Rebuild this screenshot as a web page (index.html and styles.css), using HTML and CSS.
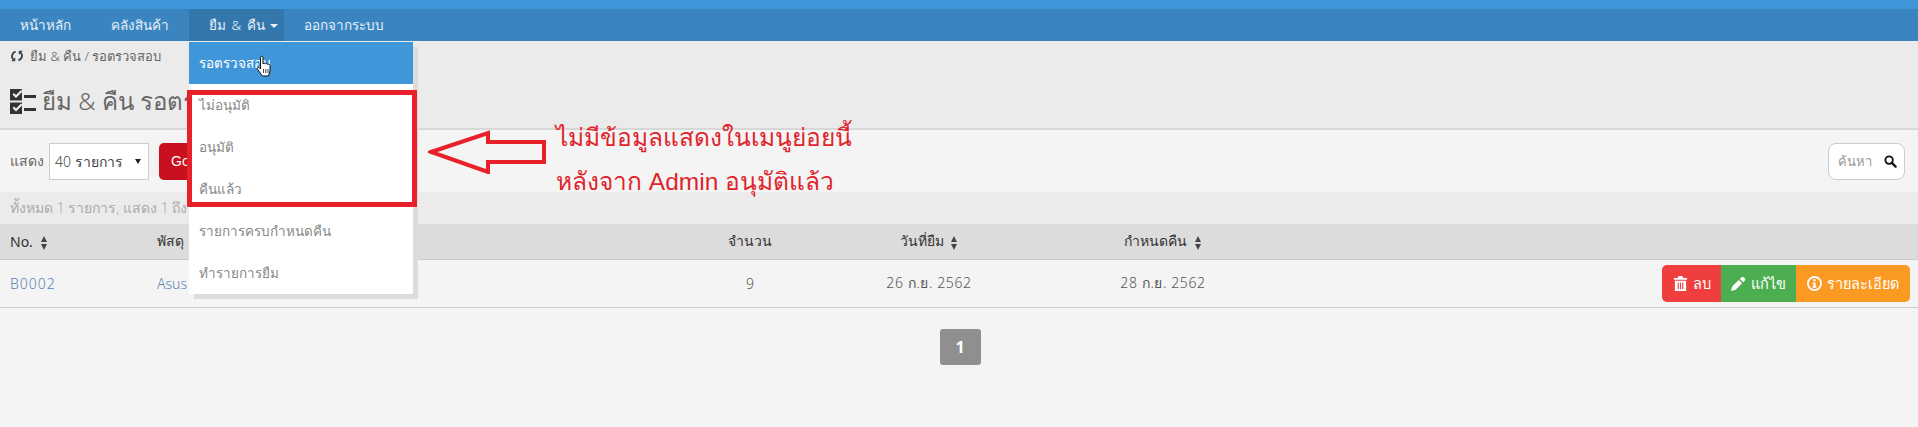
FILE: index.html
```html
<!DOCTYPE html>
<html lang="th">
<head>
  <meta charset="UTF-8">
  <title>ยืม &amp; คืน รอตรวจสอบ</title>
  <link rel="stylesheet" href="styles.css">
</head>
<body>
  <div class="top-strip"></div>
  <nav class="navbar">
    <a href="#">หน้าหลัก</a>
    <a href="#">คลังสินค้า</a>
    <a href="#" class="active">ยืม &amp; คืน <span class="caret"></span></a>
    <a href="#">ออกจากระบบ</a>
  </nav>

  <div class="page-head">
    <div class="breadcrumb">
      <svg class="crumb-icon" viewBox="0 0 16 16"><path d="M6.500 2.200A6 6 0 0 0 3 12.400L1.400 14H6V9.400l-1.600 1.600a4 4 0 0 1 2.100-6.700zM9.500 13.800A6 6 0 0 0 13 3.600L14.600 2H10v4.600l1.600-1.600a4 4 0 0 1-2.100 6.700z"/></svg>
      ยืม &amp; คืน / รอตรวจสอบ
    </div>
    <h1>
      <svg class="title-icon" viewBox="0 0 26 26">
        <path d="M0 0h12v11.500H0zM0 13.500h12V25H0z"/>
        <path d="M2.500 5.500l1.500-1.500 2 2 5-5 1.500 1.500-6.500 6.500zM2.500 19l1.500-1.500 2 2 5-5 1.500 1.500-6.500 6.500z" fill="#ebebeb"/>
        <path d="M14 6h12v3H14zM14 19h12v3H14z"/>
      </svg>
      ยืม &amp; คืน รอตรวจสอบ
    </h1>
  </div>

  <div class="toolbar">
    <div class="page-size">
      <label for="limit">แสดง</label>
      <span class="select-wrap"><select id="limit"><option>40 รายการ</option></select></span>
      <button class="btn-go">Go</button>
    </div>
    <div class="search-box">
      <span>ค้นหา</span>
      <svg viewBox="0 0 14 14"><circle cx="5.500" cy="5.500" r="4" fill="none" stroke="#111" stroke-width="2"/><path d="M8.500 8.500l4 4" stroke="#111" stroke-width="2.500" stroke-linecap="round"/></svg>
    </div>
  </div>

  <div class="summary">ทั้งหมด 1 รายการ, แสดง 1 ถึง 1 จาก 1 รายการ</div>

  <table class="data-table">
    <colgroup>
      <col class="col-no"><col class="col-item"><col class="col-qty"><col class="col-date"><col class="col-due"><col>
    </colgroup>
    <thead>
      <tr>
        <th class="left">No. <span class="sort"></span></th>
        <th class="left">พัสดุ</th>
        <th>จำนวน</th>
        <th>วันที่ยืม <span class="sort"></span></th>
        <th>กำหนดคืน <span class="sort"></span></th>
        <th></th>
      </tr>
    </thead>
    <tbody>
      <tr>
        <td class="left"><a href="#" class="code">B0002</a></td>
        <td class="left"><a href="#">Asus</a></td>
        <td>9</td>
        <td class="date">26 ก.ย. 2562</td>
        <td class="date">28 ก.ย. 2562</td>
        <td class="actions">
          <div class="btn-group">
            <a href="#" class="btn btn-del">
              <svg viewBox="0 0 14 16"><path d="M5 0h4l1 2h4v2H0V2h4zM1 5h12v11H1zM4 7v7h1.200V7zM6.400 7v7h1.200V7zM8.800 7v7H10V7z" fill-rule="evenodd"/></svg>
              ลบ
            </a>
            <a href="#" class="btn btn-edit">
              <svg viewBox="0 0 16 16"><path d="M11 1.500a2 2 0 0 1 2.800 0l.8.800a2 2 0 0 1 0 2.800L13 6.700 9.400 3.100zM8.300 4.200l3.600 3.600L5 14.600 0 16l1.400-5z"/></svg>
              แก้ไข
            </a>
            <a href="#" class="btn btn-info">
              <svg viewBox="0 0 16 16"><path fill-rule="evenodd" d="M8 0a8 8 0 1 1 0 16A8 8 0 0 1 8 0zm0 2a6 6 0 1 0 0 12A6 6 0 0 0 8 2zM6.800 3.500h2.400v2H6.800zM6 7h3.200v4H10v1.500H6V11h.8V8.500H6z"/></svg>
              รายละเอียด
            </a>
          </div>
        </td>
      </tr>
    </tbody>
  </table>

  <div class="pagination"><a href="#">1</a></div>

  <!-- เมนูย่อยที่เปิดอยู่ -->
  <ul class="dropdown">
    <li class="hover">รอตรวจสอบ</li>
    <li>ไม่อนุมัติ</li>
    <li>อนุมัติ</li>
    <li>คืนแล้ว</li>
    <li>รายการครบกำหนดคืน</li>
    <li>ทำรายการยืม</li>
  </ul>

  <svg class="hand" viewBox="0 0 17 22">
    <path d="M5 1.500c1-.8 2 0 2 1V9c.5-1 2.200-1 2.500 0 .6-.8 2.100-.6 2.400.5.700-.5 2.100-.2 2.100 1V16l-1.500 5H6.500L2 15c-1.500-2-.3-3.400 1.300-2.300L4.500 14V3c0-.5 0-1 .5-1.500z" fill="#fff" stroke="#111" stroke-width="1"/>
    <path d="M7.500 14v4M9.800 14v4M12 14v4" stroke="#111" stroke-width=".8"/>
  </svg>

  <!-- คำอธิบายบนภาพ -->
  <div class="mark-box"></div>
  <svg class="mark-arrow" viewBox="0 0 120 44">
    <path d="M3 22 60 3v9h56v20H60v10z" fill="none" stroke="#e8202a" stroke-width="4"/>
  </svg>
  <div class="mark-text">
    <p>ไม่มีข้อมูลแสดงในเมนูย่อยนี้</p>
    <p>หลังจาก Admin อนุมัติแล้ว</p>
  </div>
</body>
</html>
```

FILE: styles.css
```css
* {
  box-sizing: border-box;
}
html, body {
  height: 100%;
}
body {
  margin: 0;
  background-color: #f4f4f4;
  color: #555;
  font-family: "Noto Sans", "DejaVu Sans", sans-serif;
  font-size: 14px;
  font-weight: 300;
  overflow: hidden;
}
a {
  text-decoration: none;
}
.top-strip {
  height: 9px;
  background-color: #3f97d9;
}
.navbar {
  display: flex;
  height: 32px;
  background-color: #3a85c0;
}
.navbar a {
  padding: 0 20px;
  line-height: 32px;
  color: #e6f0f8;
  font-size: 13.5px;
}
.navbar a.active {
  width: 95px;
  padding: 0 0 0 20px;
  word-spacing: 2px;
  background-color: #3477ac;
  white-space: nowrap;
}
.caret {
  display: inline-block;
  vertical-align: middle;
  border-top: 4px solid #e6f0f8;
  border-left: 4px solid transparent;
  border-right: 4px solid transparent;
}
.page-head {
  height: 89px;
  padding: 4px 10px 0;
  background-color: #ebebeb;
  border-bottom: 2px solid #d8d8d8;
}
.breadcrumb {
  display: flex;
  align-items: center;
  gap: 6px;
  height: 22px;
  color: #666;
  font-size: 13px;
}
.crumb-icon {
  width: 14px;
  height: 14px;
  fill: #444;
}
h1 {
  display: flex;
  align-items: center;
  gap: 6px;
  margin: 15px 0 0;
  font-size: 24px;
  font-weight: 300;
  color: #666;
}
.title-icon {
  width: 26px;
  height: 26px;
  fill: #333;
}
.toolbar {
  display: flex;
  justify-content: space-between;
  align-items: center;
  height: 62px;
  padding: 0 13px 0 10px;
}
.page-size {
  display: flex;
  align-items: center;
  gap: 5px;
  color: #666;
}
.select-wrap {
  position: relative;
  display: block;
}
.select-wrap::after {
  content: "";
  position: absolute;
  right: 8px;
  top: 16px;
  border-top: 5px solid #222;
  border-left: 3px solid transparent;
  border-right: 3px solid transparent;
}
.select-wrap select {
  display: block;
  width: 100px;
  height: 37px;
  padding-left: 5px;
  appearance: none;
  background-color: #fff;
  border: 1px solid #ccc;
  border-radius: 0;
  color: #444;
  font-family: inherit;
  font-size: 14px;
  font-weight: 300;
}
.btn-go {
  width: 60px;
  height: 37px;
  margin-left: 5px;
  padding: 0 0 0 12px;
  background-color: #c8101f;
  border: none;
  border-radius: 5px;
  color: #fff;
  font-size: 14px;
  text-align: left;
}
.search-box {
  display: flex;
  justify-content: space-between;
  align-items: center;
  width: 77px;
  height: 37px;
  padding: 0 7px 0 9px;
  background-color: #fff;
  border: 1px solid #ccc;
  border-radius: 8px;
  color: #999;
  font-size: 13px;
}
.search-box svg {
  width: 13px;
  height: 13px;
}
.summary {
  height: 32px;
  padding-left: 10px;
  line-height: 32px;
  background-color: #ebebeb;
  color: #aaa;
  font-size: 14px;
}
.data-table {
  width: 100%;
  table-layout: fixed;
  border-collapse: collapse;
}
.col-no { width: 147px; }
.col-item { width: 513px; }
.col-qty { width: 180px; }
.col-date { width: 178px; }
.col-due { width: 290px; }
.data-table th {
  height: 35px;
  padding: 0;
  background-color: #dcdcdc;
  border-bottom: 1px solid #c8c8c8;
  color: #333;
  font-size: 14px;
  font-weight: 400;
  text-align: center;
}
.data-table td {
  height: 48px;
  padding: 0;
  border-bottom: 1px solid #ccc;
  color: #555;
  font-size: 14px;
  text-align: center;
}
.data-table .left {
  padding-left: 10px;
  text-align: left;
}
.data-table td a {
  color: #5b84b1;
}
.data-table td a.code {
  letter-spacing: 1px;
}
.data-table .date {
  letter-spacing: .6px;
}
.sort {
  display: inline-block;
  position: relative;
  width: 7px;
  height: 14px;
  margin-left: 4px;
  vertical-align: middle;
}
.sort::before,
.sort::after {
  content: "";
  position: absolute;
  left: 0;
  border-left: 3.5px solid transparent;
  border-right: 3.5px solid transparent;
}
.sort::before {
  top: 0;
  border-bottom: 6px solid #444;
}
.sort::after {
  bottom: 0;
  border-top: 6px solid #444;
}
.data-table .actions {
  padding-right: 8px;
  text-align: right;
}
.btn-group {
  display: inline-flex;
  height: 37px;
  border-radius: 5px;
  overflow: hidden;
  vertical-align: middle;
}
.btn {
  display: flex;
  align-items: center;
  justify-content: center;
  gap: 5px;
  color: #fff;
  font-size: 14.5px;
}
.data-table td a.btn {
  color: #fff;
}
.btn svg {
  width: 15px;
  height: 15px;
  fill: #fff;
}
.btn-del {
  width: 59px;
  background-color: #ee3e3e;
}
.btn-edit {
  width: 75px;
  background-color: #4cae50;
}
.btn-info {
  width: 114px;
  background-color: #fb9a22;
}
.pagination {
  display: flex;
  justify-content: center;
  padding-top: 21px;
}
.pagination a {
  width: 41px;
  height: 36px;
  margin-left: 2px;
  background-color: #8f8f8f;
  border-radius: 3px;
  color: #fff;
  font-size: 16px;
  font-weight: 700;
  line-height: 36px;
  text-align: center;
}
.dropdown {
  position: absolute;
  left: 189px;
  top: 42px;
  width: 224px;
  margin: 0;
  padding: 0;
  list-style: none;
  background-color: #fff;
  box-shadow: 5px 5px 0 #dcdcdc;
}
.dropdown li {
  height: 42px;
  padding-left: 10px;
  line-height: 42px;
  color: #888;
  font-size: 13.5px;
}
.dropdown li.hover {
  background-color: #3f97d9;
  color: #fff;
}
.hand {
  position: absolute;
  left: 256px;
  top: 55px;
  width: 17px;
  height: 22px;
}
.mark-box {
  position: absolute;
  left: 187px;
  top: 90px;
  width: 230px;
  height: 117px;
  border: 5px solid #e8202a;
}
.mark-arrow {
  position: absolute;
  left: 428px;
  top: 130px;
  width: 120px;
  height: 44px;
}
.mark-text {
  position: absolute;
  left: 556px;
  top: 118px;
  color: #e0242c;
  font-family: "Liberation Sans", sans-serif;
  font-size: 24.5px;
  font-weight: 400;
}
.mark-text p {
  margin: 0;
  height: 44px;
  line-height: 40px;
  white-space: nowrap;
}
```
